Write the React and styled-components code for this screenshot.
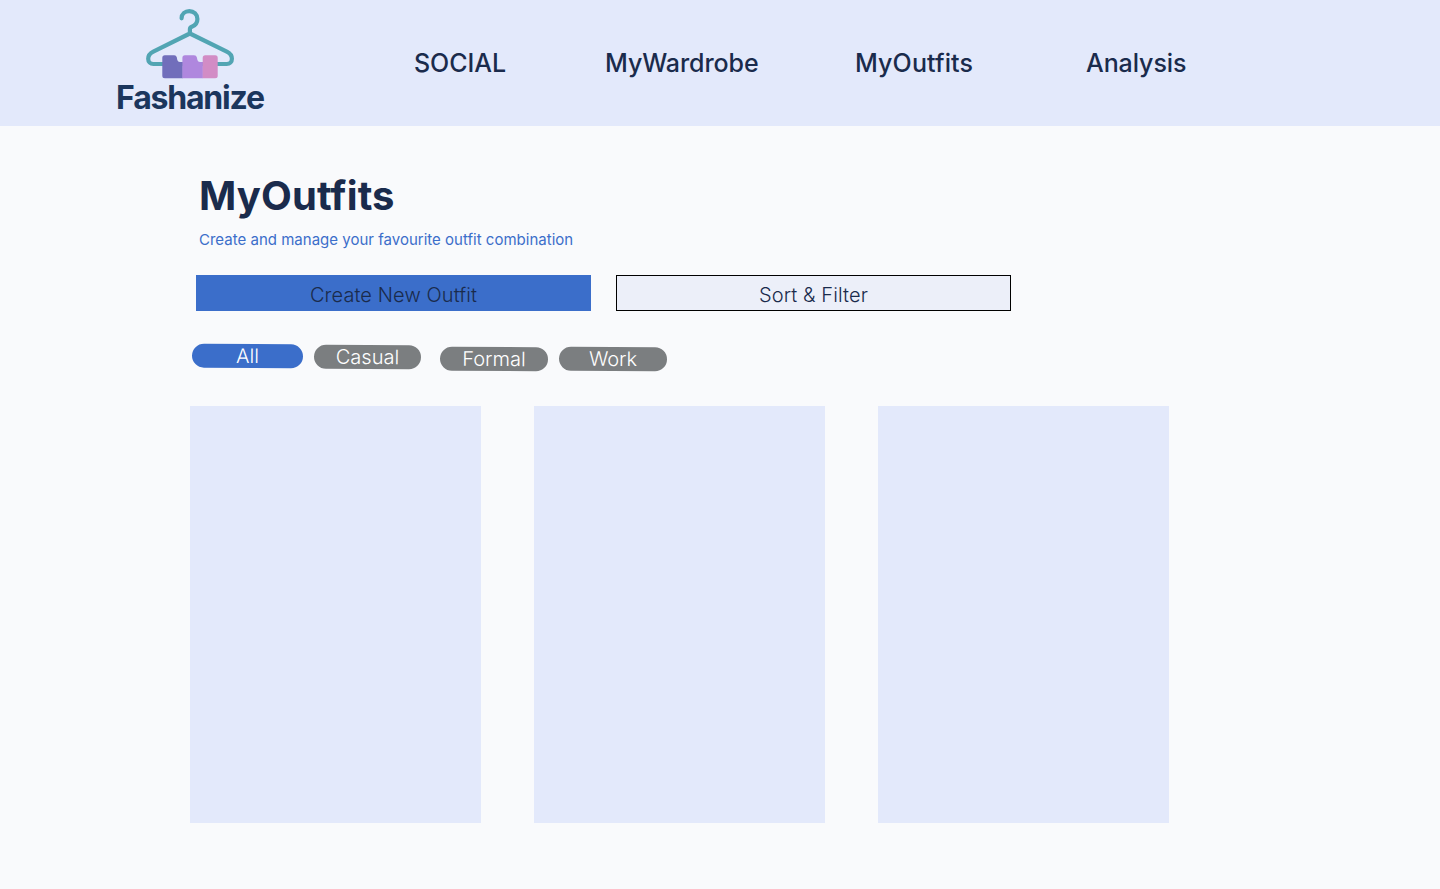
import React from "react";
import styled, { createGlobalStyle } from "styled-components";

const GlobalStyle = createGlobalStyle`
  * { box-sizing: border-box; }
  body {
    margin: 0;
    background: #f9fafc;
    color: #1a2b4c;
    font-family: Inter, "Liberation Sans", sans-serif;
    font-variant-ligatures: none;
  }
`;

const Page = styled.div`
  min-height: 889px;
  background: #f9fafc;
`;

const Header = styled.header`
  display: flex;
  height: 126px;
  padding-left: 115px;
  background: #e3e9fb;
`;

const Brand = styled.div`
  display: flex;
  flex-direction: column;
  align-items: center;
  width: 150px;
  padding-top: 6px;
`;

const BrandName = styled.span`
  margin-top: -1px;
  color: #1b365d;
  font-size: 32px;
  font-weight: 700;
  line-height: 38px;
  letter-spacing: -1.2px;
  white-space: nowrap;
`;

const Nav = styled.nav`
  display: grid;
  grid-template-columns: 191px 250px 231px auto;
  align-items: center;
  height: 126px;
  margin-left: 149px;
`;

const NavLink = styled.a`
  color: #1a2b4c;
  font-size: 25px;
  font-weight: 500;
  line-height: 30px;
  letter-spacing: ${(p) => p.$tracking}px;
  text-decoration: none;
  white-space: nowrap;
`;

const Main = styled.main`
  padding: 45px 0 66px 190px;
`;

const Title = styled.h1`
  margin: 0 0 0 9px;
  font-size: 40px;
  font-weight: 700;
  line-height: 50px;
  letter-spacing: 0.1px;
`;

const Subtitle = styled.p`
  margin: 9px 0 0 9px;
  color: #3c6eca;
  font-size: 15px;
  font-weight: 400;
  line-height: 20px;
  letter-spacing: 0.01px;
`;

const Actions = styled.div`
  display: flex;
  gap: 25px;
  margin: 25px 0 0 6px;
`;

const ActionButton = styled.button`
  width: 395px;
  height: 36px;
  padding: 4px 0 0;
  border: ${(p) => (p.$primary ? "0" : "1px solid #000")};
  background: ${(p) => (p.$primary ? "#3b6eca" : "#eceff9")};
  color: #1a2b4c;
  font: 300 20px/24px Inter, "Liberation Sans", sans-serif;
  letter-spacing: 0.1px;
  font-variant-ligatures: none;
`;

const Filters = styled.div`
  display: flex;
  height: 29px;
  margin: 32px 0 34px 2px;
`;

const Pill = styled.button`
  width: ${(p) => p.$width}px;
  height: 24px;
  margin: ${(p) => p.$top}px ${(p) => p.$gap}px 0 0;
  padding: 0;
  border: 0;
  border-radius: 12px;
  background: ${(p) => (p.$active ? "#3b6eca" : "#7b7e80")};
  color: #fff;
  font: 300 20px/24px Inter, "Liberation Sans", sans-serif;
  transform: rotate(0.4deg);
`;

const Outfits = styled.section`
  display: grid;
  grid-template-columns: repeat(3, 291px);
  gap: 53px;
`;

const OutfitCard = styled.article`
  height: 417px;
  background: #e3e9fb;
`;

const HangerLogo = () => (
  <svg width="92" height="74" viewBox="144 6 92 74" fill="none" aria-hidden="true">
    <path
      d="M181.6 18.3C181.6 14 185.1 11.1 189.3 11.1C193.8 11.1 197.4 14.5 197.4 19C197.4 22.6 195 25.6 191.8 26.8C190.6 27.3 189.9 27.9 189.9 29.2V33.5L153.3 51.6C149.9 53.3 148.2 55.5 148.2 58.7C148.2 62 150.3 64 153.4 64H226.7C229.8 64 231.9 62 231.9 58.7C231.9 55.5 230.2 53.3 226.8 51.6L189.9 33.5"
      stroke="#52a5b3"
      strokeWidth="4.2"
      strokeLinecap="round"
      strokeLinejoin="round"
    />
    <path d="M182.8 78.2H164.8Q162.3 78.2 162.3 75.7V57.7Q162.3 55.2 164.8 55.2H174.2Q176.2 55.2 176.8 57.2L177.3 60Q177.8 62 180 62H182.8Z" fill="#716ebb" />
    <path d="M182.4 78.2V57.7Q182.4 55.2 184.9 55.2H194Q196.4 55.2 196.9 57.5L197.4 60Q197.9 62 200 62H202.9V78.2Z" fill="#af87de" />
    <path d="M202.7 78.2V57.7Q202.7 55.2 205.2 55.2H215.2Q217.7 55.2 217.7 57.7V75.7Q217.7 78.2 215.2 78.2Z" fill="#d28cc5" />
  </svg>
);

const links = [
  { label: "SOCIAL", tracking: -0.05 },
  { label: "MyWardrobe", tracking: -0.08 },
  { label: "MyOutfits", tracking: 0.12 },
  { label: "Analysis", tracking: -0.08 },
];

const filters = [
  { label: "All", width: 111, top: 0.5, gap: 11, active: true },
  { label: "Casual", width: 107, top: 2, gap: 19 },
  { label: "Formal", width: 108, top: 4.4, gap: 11 },
  { label: "Work", width: 108, top: 4.4, gap: 0 },
];

export default function App() {
  return (
    <Page>
      <GlobalStyle />
      <Header>
        <Brand>
          <HangerLogo />
          <BrandName>Fashanize</BrandName>
        </Brand>
        <Nav>
          {links.map((link) => (
            <NavLink key={link.label} $tracking={link.tracking}>{link.label}</NavLink>
          ))}
        </Nav>
      </Header>
      <Main>
        <Title>MyOutfits</Title>
        <Subtitle>Create and manage your favourite outfit combination</Subtitle>
        <Actions>
          <ActionButton $primary>Create New Outfit</ActionButton>
          <ActionButton>Sort &amp; Filter</ActionButton>
        </Actions>
        <Filters>
          {filters.map((f) => (
            <Pill key={f.label} $width={f.width} $top={f.top} $gap={f.gap} $active={f.active}>
              {f.label}
            </Pill>
          ))}
        </Filters>
        <Outfits>
          <OutfitCard />
          <OutfitCard />
          <OutfitCard />
        </Outfits>
      </Main>
    </Page>
  );
}
